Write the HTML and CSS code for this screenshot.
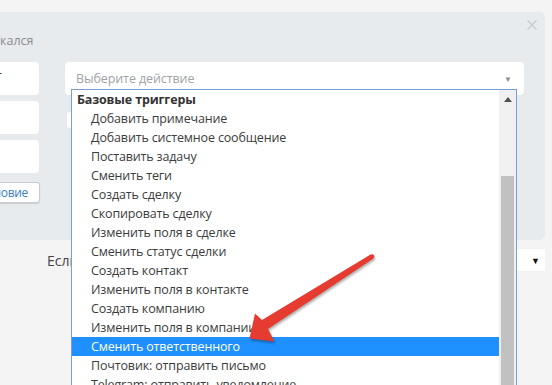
FILE: index.html
```html
<!DOCTYPE html>
<html lang="ru">
<head>
  <meta charset="UTF-8" />
  <meta name="viewport" content="width=device-width, initial-scale=1.0" />
  <title>Триггеры</title>
  <link rel="stylesheet" href="styles.css">
</head>
<body>
  <div class="topbar"></div>

  <div class="modal">
    <svg class="close" width="10" height="10" viewBox="0 0 10 10">
      <path d="M0.5 0.5 L9.5 9.5 M9.5 0.5 L0.5 9.5" stroke="#c9cbcd" stroke-width="1.3" fill="none" />
    </svg>
    <div class="modal-title">кался</div>
    <div class="modal-body">
      <div class="col-left">
        <div class="field"><span class="cut">т</span></div>
        <div class="field"></div>
        <div class="field"></div>
        <button class="btn-add"><span>ловие</span></button>
      </div>
      <div class="col-right">
        <div class="select">
          <span class="placeholder">Выберите действие</span>
          <span class="caret">&#9660;</span>
        </div>
        <div class="field-small"></div>
      </div>
    </div>
  </div>

  <div class="below">
    <span class="if-label">Если</span>
    <div class="select-mini"><span>&#9660;</span></div>
  </div>

  <!-- открытый список действий -->
  <div class="dropdown">
    <ul class="options">
      <li class="group">Базовые триггеры</li>
      <li>Добавить примечание</li>
      <li>Добавить системное сообщение</li>
      <li>Поставить задачу</li>
      <li>Сменить теги</li>
      <li>Создать сделку</li>
      <li>Скопировать сделку</li>
      <li>Изменить поля в сделке</li>
      <li>Сменить статус сделки</li>
      <li>Создать контакт</li>
      <li>Изменить поля в контакте</li>
      <li>Создать компанию</li>
      <li>Изменить поля в компании</li>
      <li class="active">Сменить ответственного</li>
      <li>Почтовик: отправить письмо</li>
      <li>Telegram: отправить уведомление</li>
    </ul>
    <div class="scrollbar">
      <span class="scroll-up"></span>
      <div class="thumb"></div>
    </div>
  </div>

  <!-- стрелка-указатель -->
  <svg class="pointer" width="552" height="385" viewBox="0 0 552 385">
    <polygon points="370.6,254.6 262,320 255,313.5 249.5,338.5 274.5,341.5 268,329 373.4,258.4" fill="#e53b30" />
    <circle cx="372" cy="256.5" r="2.3" fill="#e53b30" />
  </svg>
</body>
</html>
```

FILE: styles.css
```css
body {
  margin: 0;
  padding: 0;
  background: #f4f4f4;
  font-family: "Open Sans", Arial, sans-serif;
  font-size: 12.5px;
  color: #333;
  width: 552px;
  height: 385px;
  overflow: hidden;
  position: relative;
}
.topbar {
  height: 12px;
  background: #f4f4f4;
}
.modal {
  position: relative;
  width: 545px;
  height: 228px;
  background: #e8ebee;
  border-radius: 0 5px 5px 0;
  box-sizing: border-box;
}
.close {
  position: absolute;
  top: 8px;
  right: 8px;
}
.modal-title {
  padding-top: 20px;
  height: 18px;
  line-height: 18px;
  font-size: 12.5px;
  color: #8a8d90;
  margin-bottom: 12px;
}
.modal-body {
  display: flex;
  gap: 26px;
}
.col-left {
  width: 39px;
  display: flex;
  flex-direction: column;
  gap: 6px;
}
.field {
  height: 33px;
  background: #fff;
  border-radius: 0 4px 4px 0;
  overflow: hidden;
}
.cut {
  display: block;
  margin-left: -5px;
  line-height: 28px;
  font-size: 14px;
  color: #333;
}
.btn-add {
  margin-top: 3px;
  width: 40px;
  height: 21px;
  padding: 0 11px 0 0;
  background: #fff;
  border: 1px solid #c8ccd0;
  border-left: 0;
  border-radius: 0 3px 3px 0;
  box-shadow: 0 1px 1px rgba(0,0,0,0.12);
  font-family: "Open Sans", Arial, sans-serif;
  font-size: 12px;
  letter-spacing: -0.3px;
  color: #3b7cbd;
  display: flex;
  align-items: center;
  justify-content: flex-end;
  overflow: hidden;
  white-space: nowrap;
}
.col-right {
  width: 459px;
  display: flex;
  flex-direction: column;
  gap: 17px;
}
.select {
  height: 33px;
  background: #fff;
  border-radius: 4px;
  display: flex;
  align-items: center;
  justify-content: space-between;
  padding: 0 12px 0 11px;
}
.placeholder {
  color: #a0a3a6;
  font-size: 12.5px;
  letter-spacing: -0.1px;
}
.caret {
  color: #8c8c8c;
  font-size: 8px;
}
.field-small {
  margin-left: 2px;
  width: 12px;
  height: 16px;
  background: #fff;
  border-radius: 3px;
}
.below {
  display: flex;
  align-items: center;
  justify-content: space-between;
  padding: 9px 7px 0 47px;
}
.if-label {
  font-size: 14px;
  color: #444;
}
.select-mini {
  width: 55px;
  height: 22px;
  background: #fff;
  display: flex;
  align-items: center;
  justify-content: flex-end;
  padding-right: 5px;
  box-sizing: border-box;
  font-size: 9px;
  color: #111;
}
.dropdown {
  position: absolute;
  left: 71px;
  top: 89px;
  width: 446px;
  height: 320px;
  box-sizing: border-box;
  border: 1px solid #7c9ed6;
  background: #fff;
  display: flex;
}
.options {
  list-style: none;
  margin: 0;
  padding: 0;
  flex: 1;
}
.options li {
  height: 19px;
  line-height: 19px;
  padding-left: 19px;
  color: #3c3c3c;
  letter-spacing: -0.15px;
  white-space: nowrap;
}
.options li.group {
  padding-left: 5px;
  font-weight: bold;
  color: #333;
}
.options li.active {
  background: #1e90ff;
  color: #fff;
}
.scrollbar {
  width: 17px;
  background: #f0f0f0;
  position: relative;
}
.scroll-up {
  position: absolute;
  top: 7px;
  left: 5px;
  width: 0;
  height: 0;
  border-left: 4px solid transparent;
  border-right: 4px solid transparent;
  border-bottom: 5px solid #505050;
}
.thumb {
  position: absolute;
  top: 86px;
  left: 2px;
  right: 2px;
  bottom: 0;
  background: #c1c1c1;
}
.pointer {
  position: absolute;
  left: 0;
  top: 0;
  filter: drop-shadow(1px 2px 1px rgba(0,0,0,0.3));
}
```
